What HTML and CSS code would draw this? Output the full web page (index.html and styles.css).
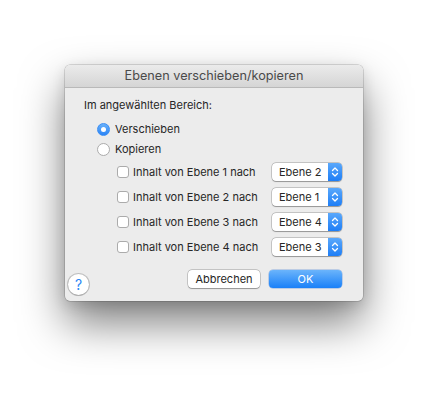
FILE: index.html
```html
<!DOCTYPE html>
<html>
<head>
<meta charset="utf-8">
<link rel="stylesheet" href="styles.css">
</head>
<body>
<div class="window">
  <div class="titlebar">Ebenen verschieben/kopieren</div>
  <div class="content">
    <div class="label">Im angewählten Bereich:</div>
    <div class="radios">
      <div class="radio-row"><span class="radio on"></span><span>Verschieben</span></div>
      <div class="radio-row"><span class="radio"></span><span>Kopieren</span></div>
    </div>
    <div class="checks">
      <div class="check-row">
        <span class="check"></span><span class="check-text">Inhalt von Ebene 1 nach</span>
        <div class="popup"><span class="popup-text">Ebene 2</span><span class="stepper"><svg width="8" height="12" viewBox="0 0 8 12"><path d="M1.5 4.5 L4 2 L6.5 4.5 M1.5 7.5 L4 10 L6.5 7.5" fill="none" stroke="#fff" stroke-width="1.3" stroke-linecap="round" stroke-linejoin="round"/></svg></span></div>
      </div>
      <div class="check-row">
        <span class="check"></span><span class="check-text">Inhalt von Ebene 2 nach</span>
        <div class="popup"><span class="popup-text">Ebene 1</span><span class="stepper"><svg width="8" height="12" viewBox="0 0 8 12"><path d="M1.5 4.5 L4 2 L6.5 4.5 M1.5 7.5 L4 10 L6.5 7.5" fill="none" stroke="#fff" stroke-width="1.3" stroke-linecap="round" stroke-linejoin="round"/></svg></span></div>
      </div>
      <div class="check-row">
        <span class="check"></span><span class="check-text">Inhalt von Ebene 3 nach</span>
        <div class="popup"><span class="popup-text">Ebene 4</span><span class="stepper"><svg width="8" height="12" viewBox="0 0 8 12"><path d="M1.5 4.5 L4 2 L6.5 4.5 M1.5 7.5 L4 10 L6.5 7.5" fill="none" stroke="#fff" stroke-width="1.3" stroke-linecap="round" stroke-linejoin="round"/></svg></span></div>
      </div>
      <div class="check-row">
        <span class="check"></span><span class="check-text">Inhalt von Ebene 4 nach</span>
        <div class="popup"><span class="popup-text">Ebene 3</span><span class="stepper"><svg width="8" height="12" viewBox="0 0 8 12"><path d="M1.5 4.5 L4 2 L6.5 4.5 M1.5 7.5 L4 10 L6.5 7.5" fill="none" stroke="#fff" stroke-width="1.3" stroke-linecap="round" stroke-linejoin="round"/></svg></span></div>
      </div>
    </div>
    <div class="footer">
      <div class="help">?</div>
      <div class="buttons">
        <div class="btn">Abbrechen</div>
        <div class="btn primary">OK</div>
      </div>
    </div>
  </div>
</div>
</body>
</html>
```

FILE: styles.css
```css
html, body {
  margin: 0;
  padding: 0;
  background: #ffffff;
}
html {
  height: 100%;
}
body {
  min-height: 100%;
  box-sizing: border-box;
  font-family: Inter, "Liberation Sans", sans-serif;
  font-size: 11px;
  color: #262626;
  padding: 65px 0 0 65px;
}
.window {
  width: 298px;
  height: 236px;
  box-sizing: border-box;
  background: #ececec;
  border-radius: 5px;
  box-shadow: 0 0 0 0.5px rgba(0,0,0,0.25), 0 22px 44px rgba(0,0,0,0.5), 0 4px 14px rgba(0,0,0,0.12);
  overflow: hidden;
}
.titlebar {
  height: 22px;
  line-height: 22px;
  text-align: center;
  font-size: 12.7px;
  color: #4a4a4a;
  background: linear-gradient(#ebebeb, #d5d5d5);
  border-bottom: 1px solid #b9b9b9;
}
.content {
  padding: 9px 21px 0 19px;
  display: flex;
  flex-direction: column;
}
.label {
  line-height: 16px;
  height: 16px;
}
.radios {
  margin-top: 6px;
  padding-left: 13px;
  display: flex;
  flex-direction: column;
}
.radio-row {
  height: 20px;
  display: flex;
  align-items: center;
  gap: 5px;
}
.radio {
  width: 13px;
  height: 13px;
  box-sizing: border-box;
  border-radius: 50%;
  background: #fff;
  border: 1px solid #ababab;
  position: relative;
}
.radio.on {
  border: 1px solid #3b8ef4;
  background: linear-gradient(#69b1fa, #2a84f6);
}
.radio.on::after {
  content: "";
  position: absolute;
  width: 5px;
  height: 5px;
  border-radius: 50%;
  background: #fff;
  left: 3px;
  top: 3px;
}
.checks {
  margin-top: 4px;
  padding-left: 33px;
  display: flex;
  flex-direction: column;
  gap: 7px;
}
.check-row {
  height: 18px;
  display: flex;
  align-items: center;
}
.check {
  width: 12px;
  height: 12px;
  box-sizing: border-box;
  border: 1px solid #ababab;
  border-radius: 3px;
  background: #fff;
}
.check-text {
  margin-left: 4px;
}
.popup {
  margin-left: auto;
  width: 70px;
  height: 18px;
  box-sizing: border-box;
  border-radius: 4px;
  background: #fff;
  box-shadow: 0 0 0 0.5px rgba(0,0,0,0.3), 0 0.5px 1px rgba(0,0,0,0.25);
  display: flex;
  overflow: hidden;
}
.popup-text {
  flex: 1;
  padding-left: 7px;
  line-height: 18px;
  font-size: 11px;
}
.stepper {
  width: 14px;
  background: linear-gradient(#5aa8fb, #1e7ef6);
  display: flex;
  align-items: center;
  justify-content: center;
}
.footer {
  margin-top: 14px;
  display: flex;
  justify-content: space-between;
  align-items: flex-start;
}
.help {
  width: 21px;
  height: 21px;
  box-sizing: border-box;
  margin-left: -16px;
  margin-top: 4px;
  border-radius: 50%;
  background: #fff;
  box-shadow: 0 0 0 1px rgba(0,0,0,0.18), 0 0.5px 1px rgba(0,0,0,0.2);
  color: #2a86f6;
  font-size: 14px;
  line-height: 21px;
  text-align: center;
}
.buttons {
  display: flex;
  gap: 9px;
}
.btn {
  width: 72px;
  height: 18px;
  line-height: 18px;
  text-align: center;
  background: #fff;
  border-radius: 4px;
  box-shadow: 0 0 0 0.5px rgba(0,0,0,0.3), 0 0.5px 1px rgba(0,0,0,0.25);
  font-size: 11px;
}
.btn.primary {
  width: 73px;
  color: #fff;
  background: linear-gradient(#6bb4fb, #1a80f8);
  box-shadow: 0 0 0 0.5px rgba(0,80,200,0.4);
}
```
